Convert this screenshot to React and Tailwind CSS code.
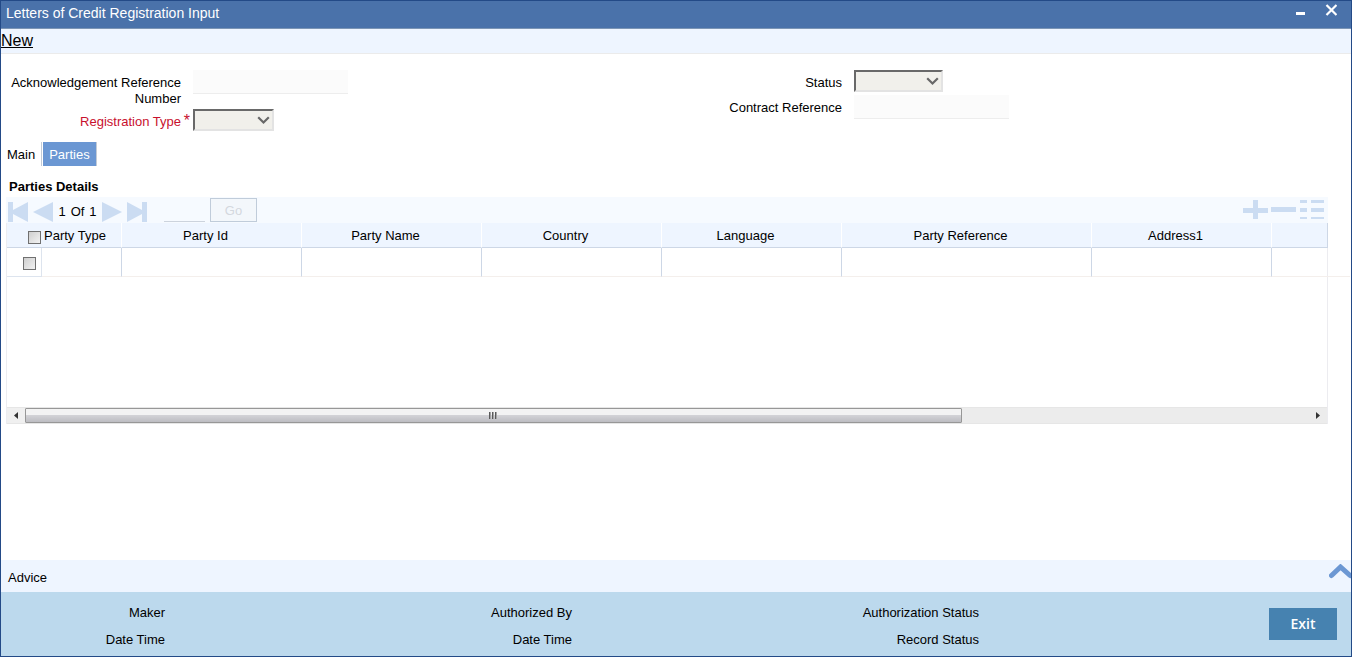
import React, { useState } from 'react';

const columns = [
  { name: 'Party Type', width: 'w-[80px]' },
  { name: 'Party Id', width: 'w-[180px]' },
  { name: 'Party Name', width: 'w-[180px]' },
  { name: 'Country', width: 'w-[180px]' },
  { name: 'Language', width: 'w-[180px]' },
  { name: 'Party Reference', width: 'w-[250px]' },
  { name: 'Address1', width: 'w-[180px]' },
];

const auditFields = [
  ['Maker', 'Date Time'],
  ['Authorized By', 'Date Time'],
  ['Authorization Status', 'Record Status'],
];

const TitleBar = () => (
  <header className="flex h-7 items-start justify-between border-b border-[#7c95b5] bg-[#4a72aa] pl-[5px] pr-[14px] text-white">
    <h1 className="text-sm leading-6">Letters of Credit Registration Input</h1>
    <div className="flex gap-5 pt-[3px]">
      <button type="button" aria-label="Minimize" className="h-3">
        <svg width="10" height="12" viewBox="0 0 10 12">
          <path d="M1 8h9v3H1z" fill="currentColor" />
        </svg>
      </button>
      <button type="button" aria-label="Close" className="h-3">
        <svg width="12" height="12" viewBox="0 0 12 12">
          <path d="M1.5 1l10 10M11.5 1l-10 10" stroke="currentColor" strokeWidth="2.2" />
        </svg>
      </button>
    </div>
  </header>
);

const Field = ({ id, label, required, children }) => (
  <div className="flex items-start gap-3">
    <label
      htmlFor={id}
      className={`relative w-[180px] pt-[5px] text-right leading-4 ${required ? 'text-[#c8102e]' : ''}`}
    >
      {label}
      {required && <span className="absolute -right-[9px] top-0 text-base">*</span>}
    </label>
    {children}
  </div>
);

const TextBox = ({ id }) => (
  <input
    id={id}
    type="text"
    readOnly
    className="h-6 w-[155px] border-b border-[#ededed] bg-[#fbfbfb] outline-none"
  />
);

const SelectBox = ({ id, width }) => (
  <div className={`relative ${width}`}>
    <select
      id={id}
      className="block h-[22px] w-full appearance-none border-2 border-b-[#e3e3e3] border-l-[#696969] border-r-[#e3e3e3] border-t-[#696969] bg-[#f1f0eb]"
    >
      <option value=""></option>
    </select>
    <svg className="pointer-events-none absolute right-1 top-[7px]" width="13" height="9" viewBox="0 0 13 9">
      <path d="M1.2 1.2l5.3 5.3 5.3-5.3" fill="none" stroke="#686868" strokeWidth="2.2" />
    </svg>
  </div>
);

const CheckBox = (props) => (
  <input
    type="checkbox"
    className="block size-[13px] appearance-none border border-[#707070] bg-linear-to-br from-[#cfcfcf] to-[#f2f2f2] checked:bg-[#4a72aa]"
    {...props}
  />
);

const NavButton = ({ label, d }) => (
  <button type="button" aria-label={label}>
    <svg width="20" height="20" viewBox="0 0 20 20">
      <path d={d} fill="#cbdcf2" />
    </svg>
  </button>
);

const Toolbar = () => (
  <div className="flex h-[26px] items-center justify-between bg-[#f6faff] pr-1">
    <div className="flex items-center">
      <div className="flex items-center gap-[5px] pl-[2px] pt-1">
        <NavButton label="First" d="M0 0h5v8L20 0v20L5 12v8H0z" />
        <NavButton label="Previous" d="M20 0v20L0 10z" />
        <div className="flex w-[39px] justify-center gap-[5px]">
          <span>1</span>
          <span>Of</span>
          <span>1</span>
        </div>
        <NavButton label="Next" d="M0 0v20l20-10z" />
        <NavButton label="Last" d="M0 0l15 8V0h5v20h-5v-8L0 20z" />
      </div>
      <input
        type="text"
        aria-label="Go to record"
        className="ml-[17px] h-6 w-[41px] border-b border-[#ccd3dd] outline-none"
      />
      <button
        type="button"
        disabled
        className="ml-[5px] h-6 w-[47px] border border-[#c0ccda] bg-[#f3f7fb] pt-px text-[#d3d8de]"
      >
        Go
      </button>
    </div>
    <div className="flex items-center gap-[3px]">
      <button type="button" aria-label="Add row">
        <svg width="25" height="20" viewBox="0 0 25 20">
          <path d="M10 0h5v8h10v5H15v6h-5v-6H0V8h10z" fill="#cbdcf2" />
        </svg>
      </button>
      <button type="button" aria-label="Delete row">
        <svg width="25" height="20" viewBox="0 0 25 20">
          <path d="M0 7h25v5H0z" fill="#cbdcf2" />
        </svg>
      </button>
      <button type="button" aria-label="Single record view">
        <svg width="25" height="20" viewBox="0 0 25 20">
          <path d="M1 0h7v3H1zM12 0h13v3H12zM1 8h7v4H1zM12 8h13v4H12zM1 17h7v2H1zM12 17h13v2H12z" fill="#cbdcf2" />
        </svg>
      </button>
    </div>
  </div>
);

const PartiesTable = () => (
  <table className="w-[calc(100%+23px)] table-fixed border-separate border-spacing-0">
    <thead>
      <tr className="h-[25px]">
        <th className="w-[35px] border-b border-[#cdd7e6] bg-[#eef5ff] p-0">
          <div className="flex justify-end pr-px pt-1">
            <CheckBox aria-label="Select all rows" />
          </div>
        </th>
        {columns.map((col) => (
          <th
            key={col.name}
            className={`${col.width} border-b border-r border-b-[#cdd7e6] border-r-white bg-[#eef5ff] p-0 pt-px font-normal`}
          >
            <span className={`block ${col.name === 'Party Type' ? 'pl-[2px] text-left' : 'pr-3 text-center'}`}>
              {col.name}
            </span>
          </th>
        ))}
        <th className="border-b border-r border-[#cdd7e6] bg-[#eef5ff] p-0"></th>
        <th className="w-[22px] p-0"></th>
      </tr>
    </thead>
    <tbody>
      <tr className="h-[29px]">
        <td className="border-b border-r border-[#dde4ee] p-0 pt-[3px]">
          <div className="flex justify-end pr-[5px]">
            <CheckBox aria-label="Select row 1" />
          </div>
        </td>
        {columns.map((col) => (
          <td key={col.name} className="border-b border-r border-b-[#f4efec] border-r-[#cdd7e6] p-0"></td>
        ))}
        <td className="border-b border-[#f4efec] p-0"></td>
        <td className="border-b border-[#f4efec] p-0"></td>
      </tr>
    </tbody>
  </table>
);

const ScrollBar = () => (
  <div className="flex h-[17px] items-center border-y border-[#e6e6e6] bg-[#ececec]">
    <button type="button" aria-label="Scroll left" className="flex h-full w-[18px] shrink-0 items-center justify-center bg-[#f0f0f0]">
      <svg width="4" height="7" viewBox="0 0 4 7">
        <path d="M4 0v7L0 3.5z" fill="#333" />
      </svg>
    </button>
    <div className="h-full flex-1">
      <div className="flex h-[15px] w-[73%] items-center justify-center rounded-[1px] border border-[#979797] bg-linear-to-b from-[#f3f3f3] from-45% via-[#d2d2d6] via-50% to-[#bdbdc2]">
        <svg width="10" height="7" viewBox="0 0 10 7">
          <path d="M.5 0v7M3.5 0v7M6.5 0v7" stroke="#5a5a5a" />
          <path d="M1.5 0v7M4.5 0v7M7.5 0v7" stroke="#a5a5a5" />
        </svg>
      </div>
    </div>
    <button type="button" aria-label="Scroll right" className="flex h-full w-[18px] shrink-0 items-center justify-center">
      <svg width="4" height="7" viewBox="0 0 4 7">
        <path d="M0 0v7l4-3.5z" fill="#333" />
      </svg>
    </button>
  </div>
);

const App = () => {
  const [tab, setTab] = useState('Parties');

  return (
    <div className="flex min-h-screen flex-col border border-[#234a87] bg-white font-['Liberation_Sans',Arial,sans-serif] text-[13px] text-black">
      <TitleBar />

      <nav className="h-[25px] border-b border-[#ebebeb] bg-[#eef5ff] text-base leading-6">
        <a href="#new" className="underline">New</a>
      </nav>

      <main className="flex-1">
        <form className="grid grid-cols-2 pr-7 pt-4">
          <div className="flex flex-col gap-[2px]">
            <Field id="ackRef" label="Acknowledgement Reference Number">
              <TextBox id="ackRef" />
            </Field>
            <Field id="regType" label="Registration Type" required>
              <SelectBox id="regType" width="w-[81px]" />
            </Field>
          </div>
          <div className="flex flex-col gap-[3px]">
            <Field id="status" label="Status">
              <SelectBox id="status" width="w-[89px]" />
            </Field>
            <Field id="contractRef" label="Contract Reference">
              <TextBox id="contractRef" />
            </Field>
          </div>
        </form>

        <div role="tablist" className="mt-[11px] flex h-6">
          {['Main', 'Parties'].map((name) => (
            <button
              key={name}
              type="button"
              role="tab"
              aria-selected={tab === name}
              onClick={() => setTab(name)}
              className={`mr-px border-r border-[#c3cbd6] px-1.5 pt-px ${tab === name ? 'bg-[#6b97d3] text-white' : ''}`}
            >
              {name}
            </button>
          ))}
        </div>

        <section className="ml-[5px] mr-[23px]">
          <h2 className="pb-[2px] pl-[3px] pt-[13px] font-bold leading-4">Parties Details</h2>
          <Toolbar />
          <div className="border-x border-[#ececf0]">
            <div className="h-[184px]">
              <PartiesTable />
            </div>
            <ScrollBar />
          </div>
        </section>
      </main>

      <div className="flex h-8 items-start justify-between bg-[#eef5ff] pl-[7px]">
        <a href="#advice" className="leading-9">Advice</a>
        <button type="button" aria-label="Expand" className="mt-1">
          <svg width="22" height="15" viewBox="0 0 22 15">
            <path d="M2.5 11.5L11.5 3l9.5 8.5" fill="none" stroke="#6b97d3" strokeWidth="5" strokeLinecap="round" />
          </svg>
        </button>
      </div>

      <footer className="flex h-16 justify-between bg-[#bcd9ed] pr-[14px]">
        <div className="flex flex-1">
          {auditFields.map((group) => (
            <div key={group[0]} className="flex w-[407px] flex-col gap-[11px] pt-[13px]">
              {group.map((label) => (
                <span key={label} className="w-[164px] text-right leading-4">{label}</span>
              ))}
            </div>
          ))}
        </div>
        <button type="button" className="mt-4 h-8 w-[68px] bg-[#4682b0] font-['Open_Sans','Noto_Sans',sans-serif] text-sm font-semibold text-white">
          Exit
        </button>
      </footer>
    </div>
  );
};

export default App;
